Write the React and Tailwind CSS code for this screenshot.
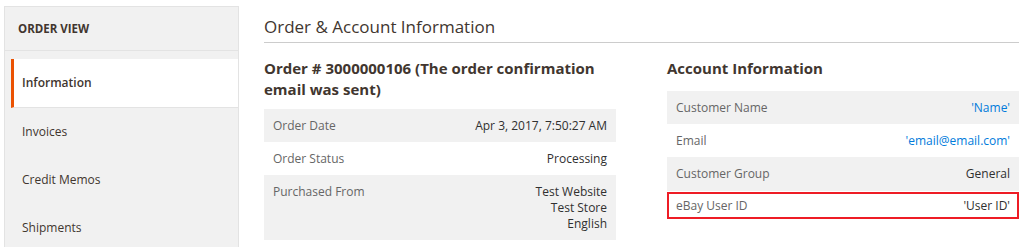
export default function App() {
    const font = { fontFamily: '"Open Sans", "Noto Sans", sans-serif' };
    return (
        <div className="w-[1024px] h-[247px] overflow-hidden bg-white flex text-[#303030]" style={font}>

            <div className="ml-[4px] mt-[6px] w-[235px] shrink-0 bg-[#f1f1f1] border border-[#e3e3e3] border-b-0">
                <div className="h-[44px] flex items-center pl-[13px] text-[11.5px] font-bold text-[#41362f] border-b border-[#e3e3e3]">
                    ORDER VIEW
                </div>
                <div className="pt-[8px]">
                    <div className="ml-[6px] h-[49px] flex items-center bg-white border-l-[3px] border-[#eb5202] border-b border-b-[#e3e3e3] pl-[8px] text-[12px] font-semibold text-[#41362f]">
                        Information
                    </div>
                    <div className="ml-[6px] h-[48px] flex items-center pl-[11px] text-[12px] text-[#41362f]">Invoices</div>
                    <div className="ml-[6px] h-[48px] flex items-center pl-[11px] text-[12px] text-[#41362f]">Credit Memos</div>
                    <div className="ml-[6px] h-[48px] flex items-center pl-[11px] text-[12px] text-[#41362f]">Shipments</div>
                </div>
            </div>

            <div className="ml-[25px] w-[755px] shrink-0">
                <div className="mt-[14px] h-[29px] border-b border-[#cccccc] text-[17px] leading-[26px] text-[#41362f]">
                    Order &amp; Account Information
                </div>

                <div className="flex gap-[51px] mt-[15px]">
                    <div className="w-[352px]">
                        <h2 className="text-[15px] leading-[21px] font-bold text-[#41362f] mb-[9px]">
                            Order # 3000000106 (The order confirmation email was sent)
                        </h2>
                        <div className="text-[12px] leading-[16px]">
                            <div className="h-[33px] flex items-center justify-between px-[9px] bg-[#f1f1f1]">
                                <span className="text-[#666]">Order Date</span>
                                <span>Apr 3, 2017, 7:50:27 AM</span>
                            </div>
                            <div className="h-[33px] flex items-center justify-between px-[9px]">
                                <span className="text-[#666]">Order Status</span>
                                <span>Processing</span>
                            </div>
                            <div className="h-[65px] flex items-start justify-between px-[9px] pt-[9px] bg-[#f1f1f1]">
                                <span className="text-[#666]">Purchased From</span>
                                <span className="text-right">Test Website<br />Test Store<br />English</span>
                            </div>
                        </div>
                    </div>

                    <div className="w-[352px]">
                        <h2 className="text-[15px] leading-[21px] font-bold text-[#41362f] mb-[12px]">
                            Account Information
                        </h2>
                        <div className="text-[12px] leading-[16px]">
                            <div className="h-[33px] flex items-center justify-between px-[9px] bg-[#f1f1f1]">
                                <span className="text-[#666]">Customer Name</span>
                                <span className="text-[#007bdb]">'Name'</span>
                            </div>
                            <div className="h-[33px] flex items-center justify-between px-[9px]">
                                <span className="text-[#666]">Email</span>
                                <span className="text-[#007bdb]">'email@email.com'</span>
                            </div>
                            <div className="h-[34px] flex items-center justify-between px-[9px] bg-[#f1f1f1]">
                                <span className="text-[#666]">Customer Group</span>
                                <span>General</span>
                            </div>
                            <div className="mt-[1px] h-[27px] flex items-center justify-between px-[7px] border-2 border-[#ee1c25]">
                                <span className="text-[#666]">eBay User ID</span>
                                <span>'User ID'</span>
                            </div>
                        </div>
                    </div>
                </div>
            </div>
        </div>
    );
}
